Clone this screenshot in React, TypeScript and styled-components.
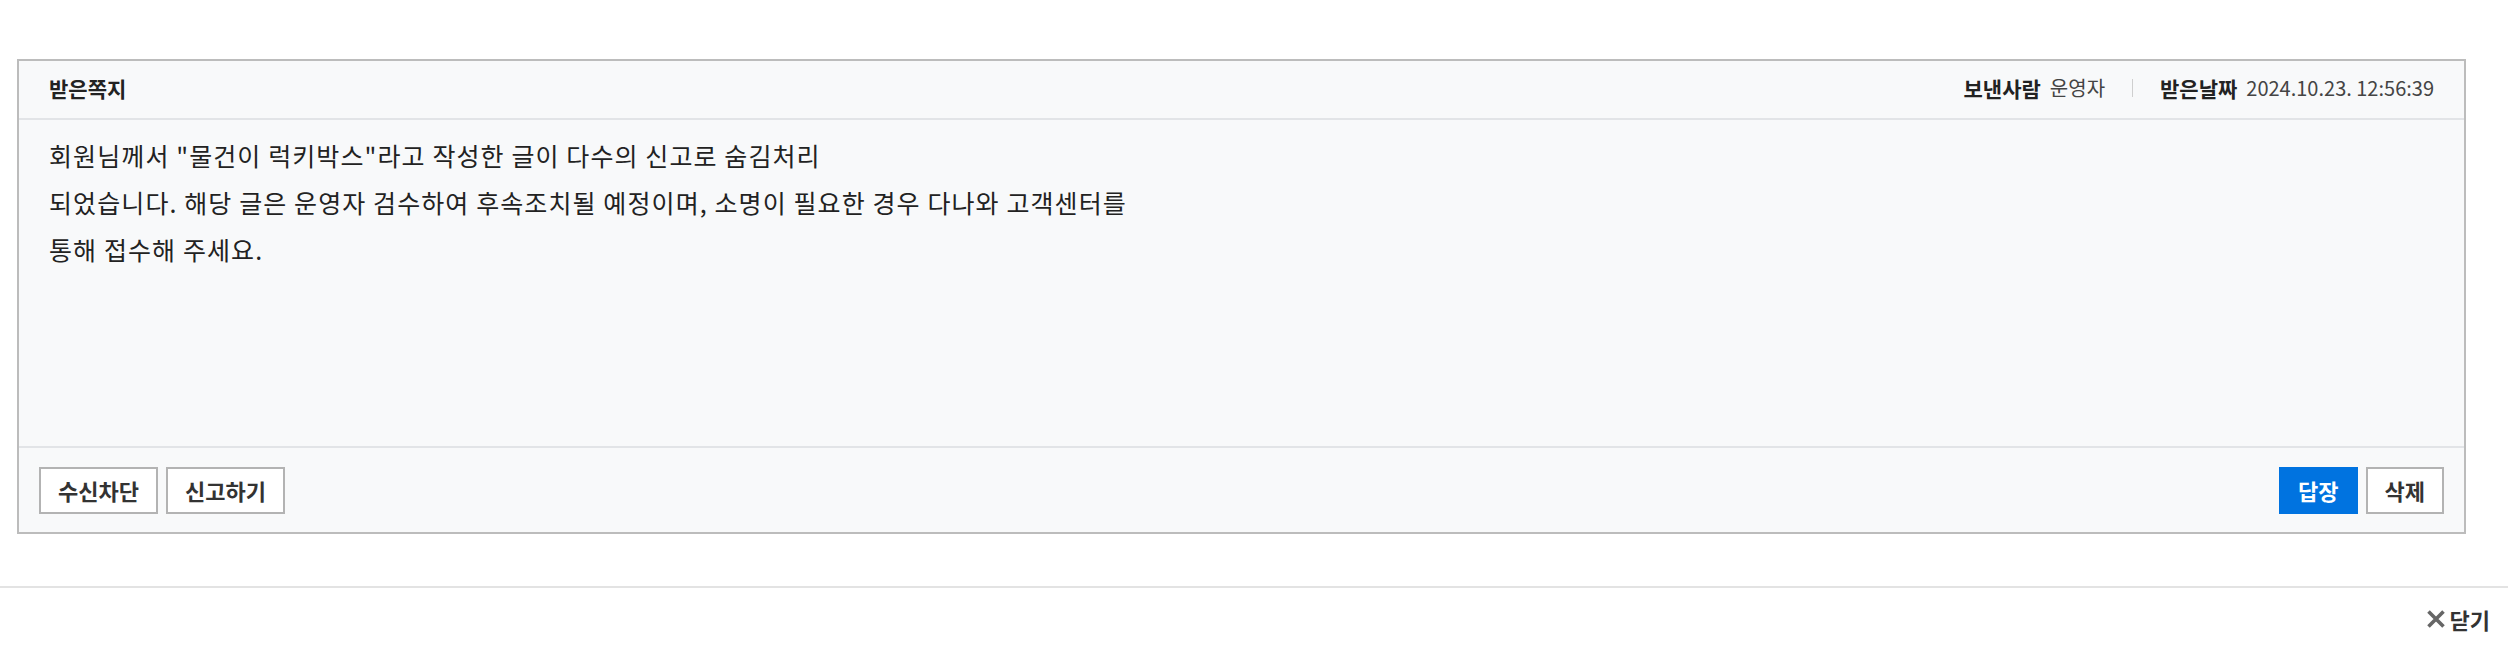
import React from "react";
import styled, { createGlobalStyle } from "styled-components";

const GlobalStyle = createGlobalStyle`
  html, body {
    margin: 0;
    padding: 0;
    background: #ffffff;
    font-family: "Noto Sans CJK KR", "Noto Sans", sans-serif;
    color: #222222;
  }
`;

const Page = styled.div`
  width: 100%;
`;

const Content = styled.div`
  padding: 59px 42px 52px 17px;
`;

const Card = styled.div`
  border: 2px solid #bcbcbc;
  background: #f8f9fa;
`;

const CardHeader = styled.div`
  display: flex;
  align-items: center;
  justify-content: space-between;
  box-sizing: border-box;
  height: 59px;
  padding: 0 30px 4px;
  border-bottom: 2px solid #e2e4e7;
`;

const Title = styled.h2`
  margin: 0;
  font-size: 21px;
  font-weight: 700;
  color: #222222;
`;

const Meta = styled.div`
  display: flex;
  align-items: center;
  font-size: 20px;
  color: #444444;
`;

const MetaLabel = styled.strong`
  font-size: 21px;
  font-weight: 700;
  color: #222222;
  margin-right: 9px;
`;

const Divider = styled.span`
  display: inline-block;
  width: 1px;
  height: 18px;
  background: #cfcfcf;
  margin: 0 27px;
`;

const Message = styled.div`
  min-height: 302px;
  padding: 12px 30px;
  font-size: 25px;
  letter-spacing: 1.1px;
  line-height: 47px;
  color: #222222;
`;

const CardFooter = styled.div`
  display: flex;
  align-items: center;
  justify-content: space-between;
  height: 84px;
  padding: 0 20px;
  border-top: 2px solid #e2e4e7;
`;

const ButtonGroup = styled.div`
  display: flex;
  gap: 8px;
`;

const Button = styled.button<{ $primary?: boolean }>`
  height: 47px;
  padding: 0 17px;
  border: 2px solid ${(p) => (p.$primary ? "#0073e0" : "#b3b3b3")};
  background: ${(p) => (p.$primary ? "#0073e0" : "#ffffff")};
  color: ${(p) => (p.$primary ? "#ffffff" : "#333333")};
  font-family: "Noto Sans CJK KR", "Noto Sans", sans-serif;
  font-size: 22px;
  font-weight: 700;
  cursor: pointer;
`;

const BottomBar = styled.div`
  display: flex;
  justify-content: flex-end;
  align-items: center;
  height: 62px;
  padding: 0 18px;
  border-top: 2px solid #e3e3e3;
`;

const CloseButton = styled.button`
  display: flex;
  align-items: center;
  gap: 5px;
  border: none;
  background: none;
  padding: 0;
  font-family: "Noto Sans CJK KR", "Noto Sans", sans-serif;
  font-size: 22px;
  font-weight: 700;
  color: #333333;
  cursor: pointer;
`;

const CloseIcon = () => (
  <svg width="18" height="18" viewBox="0 0 18 18" aria-hidden="true">
    <path d="M1.5 1.5 L16.5 16.5 M16.5 1.5 L1.5 16.5" stroke="#666666" strokeWidth="3.6" />
  </svg>
);

const App: React.FC = () => {
  return (
    <Page>
      <GlobalStyle />
      <Content>
        <Card>
          <CardHeader>
            <Title>받은쪽지</Title>
            <Meta>
              <MetaLabel>보낸사람</MetaLabel>
              운영자
              <Divider />
              <MetaLabel>받은날짜</MetaLabel>
              2024.10.23. 12:56:39
            </Meta>
          </CardHeader>
          <Message>
            회원님께서 "물건이 럭키박스"라고 작성한 글이 다수의 신고로 숨김처리
            <br />
            되었습니다. 해당 글은 운영자 검수하여 후속조치될 예정이며, 소명이 필요한 경우 다나와 고객센터를
            <br />
            통해 접수해 주세요.
          </Message>
          <CardFooter>
            <ButtonGroup>
              <Button>수신차단</Button>
              <Button>신고하기</Button>
            </ButtonGroup>
            <ButtonGroup>
              <Button $primary>답장</Button>
              <Button>삭제</Button>
            </ButtonGroup>
          </CardFooter>
        </Card>
      </Content>
      <BottomBar>
        <CloseButton>
          <CloseIcon />
          닫기
        </CloseButton>
      </BottomBar>
    </Page>
  );
};

export default App;
